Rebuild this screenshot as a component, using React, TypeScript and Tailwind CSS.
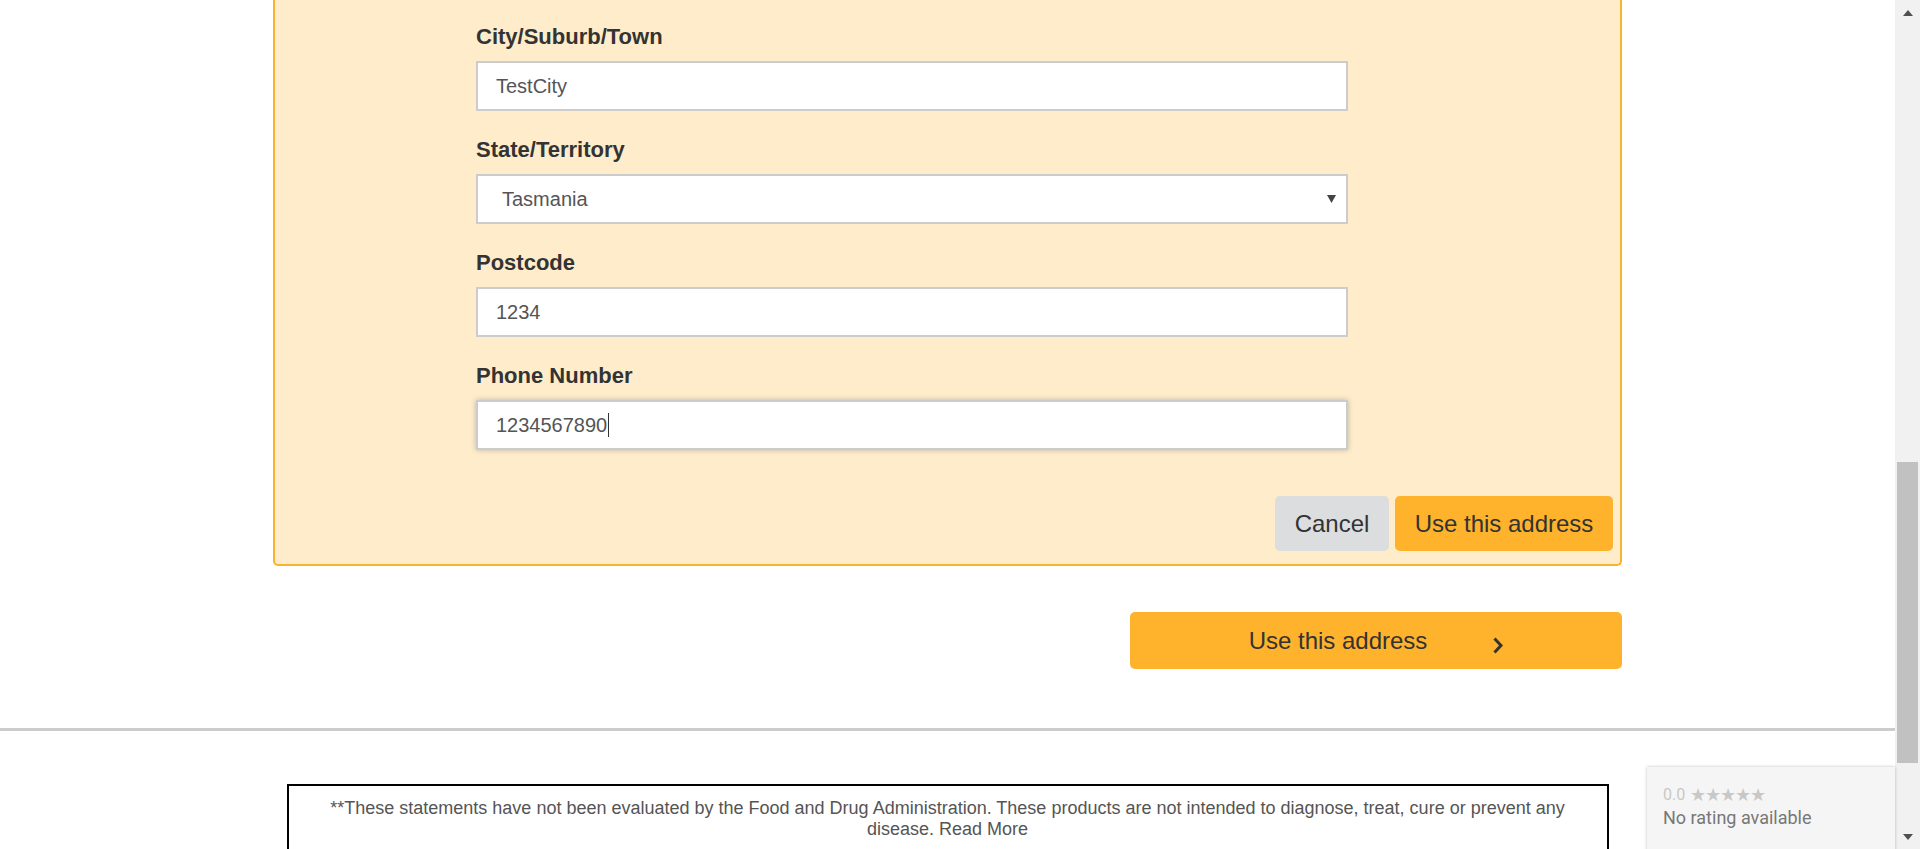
import React from "react";

const font = { fontFamily: '"Liberation Sans", Arial, sans-serif' };

function Field({ label, children }: { label: string; children: React.ReactNode }) {
    return (
        <div className="flex flex-col">
            <div className="text-[22px] leading-[26px] font-bold text-[#333] mb-[11px]">{label}</div>
            {children}
        </div>
    );
}

function TextBox({ value, focused }: { value: string; focused?: boolean }) {
    return (
        <div
            className={
                focused
                    ? "h-[50px] bg-white border-2 border-[#cccccc] pl-[18px] flex items-center text-[20px] text-[#555] shadow-[0_0_5px_rgba(60,80,100,0.35)]"
                    : "h-[50px] bg-white border-2 border-[#cccccc] pl-[18px] flex items-center text-[20px] text-[#555]"
            }
        >
            <span>{value}</span>
            {focused && <span className="w-px h-[24px] bg-[#333] ml-px" />}
        </div>
    );
}

export default function App() {
    return (
        <div className="flex h-[849px] w-[1920px] overflow-hidden bg-white" style={font}>
            <div className="relative flex-1 flex flex-col">
                <div className="shrink-0 w-[1349px] mx-auto flex flex-col">
                    {/* Address form panel */}
                    <div className="bg-[#feecca] border-2 border-t-0 border-[#fdb22c] rounded-b-[5px] pt-[24px] pb-[13px] pr-[7px]">
                        <div className="ml-[201px] w-[872px] flex flex-col gap-[26px]">
                            <Field label="City/Suburb/Town">
                                <TextBox value="TestCity" />
                            </Field>
                            <Field label="State/Territory">
                                <div className="h-[50px] bg-white border-2 border-[#cccccc] pl-[24px] pr-[10px] flex items-center justify-between text-[20px] text-[#555]">
                                    <span>Tasmania</span>
                                    <svg width="9" height="8" viewBox="0 0 9 8">
                                        <polygon points="0,0 9,0 4.5,8" fill="#444" />
                                    </svg>
                                </div>
                            </Field>
                            <Field label="Postcode">
                                <TextBox value="1234" />
                            </Field>
                            <Field label="Phone Number">
                                <TextBox value="1234567890" focused />
                            </Field>
                        </div>
                        <div className="flex justify-end gap-[6px] mt-[46px]">
                            <button className="w-[114px] h-[55px] rounded-[5px] bg-[#dcdddf] text-[24px] text-[#333]">
                                Cancel
                            </button>
                            <button className="w-[218px] h-[55px] rounded-[5px] bg-[#ffb22c] text-[24px] text-[#333]">
                                Use this address
                            </button>
                        </div>
                    </div>

                    <button className="self-end mt-[46px] w-[492px] h-[57px] rounded-[5px] bg-[#ffb22c] text-[24px] text-[#333] flex items-center justify-center">
                        <span>Use this address</span>
                        <svg className="ml-[66px] mt-[10px]" width="10" height="17" viewBox="0 0 10 17">
                            <polyline points="1.5,1.5 8,8.5 1.5,15.5" fill="none" stroke="#333" strokeWidth="3" />
                        </svg>
                    </button>
                </div>

                <div className="shrink-0 h-[3px] mt-[59px] bg-[#cccccc]" />

                {/* Disclaimer */}
                <div className="shrink-0 w-[1322px] mx-auto mt-[53px] border-2 border-black pt-[12px] pb-[20px] px-[30px] text-center text-[18px] leading-[21px] text-[#555]">
                    **These statements have not been evaluated by the Food and Drug Administration. These products are not intended to diagnose, treat, cure or prevent any disease. Read More
                </div>

                {/* Rating widget */}
                <div
                    className="absolute right-0 top-[767px] w-[248px] h-[120px] bg-[#f5f5f5] shadow-[0_0_3px_rgba(0,0,0,0.25)] pl-[16px] pt-[18px]"
                    style={{ fontFamily: 'Roboto, "Liberation Sans", sans-serif' }}
                >
                    <div className="flex items-center gap-[5px] text-[16px] leading-[20px] text-[#c8c8c8]">
                        <span>0.0</span>
                        <span className="text-[18px] tracking-[-1px]">★★★★★</span>
                    </div>
                    <div className="text-[18px] leading-[22px] text-[#777] mt-[2px]">No rating available</div>
                </div>
            </div>

            {/* Scrollbar */}
            <div className="w-[25px] bg-[#f1f1f1] flex flex-col">
                <div className="h-[25px] flex items-center justify-center">
                    <svg width="10" height="6" viewBox="0 0 10 6">
                        <polygon points="5,0 10,6 0,6" fill="#505050" />
                    </svg>
                </div>
                <div className="flex-1">
                    <div className="mt-[437px] h-[301px] w-[21px] mx-auto bg-[#c1c1c1]" />
                </div>
                <div className="h-[25px] flex items-center justify-center">
                    <svg width="10" height="6" viewBox="0 0 10 6">
                        <polygon points="0,0 10,0 5,6" fill="#505050" />
                    </svg>
                </div>
            </div>
        </div>
    );
}
